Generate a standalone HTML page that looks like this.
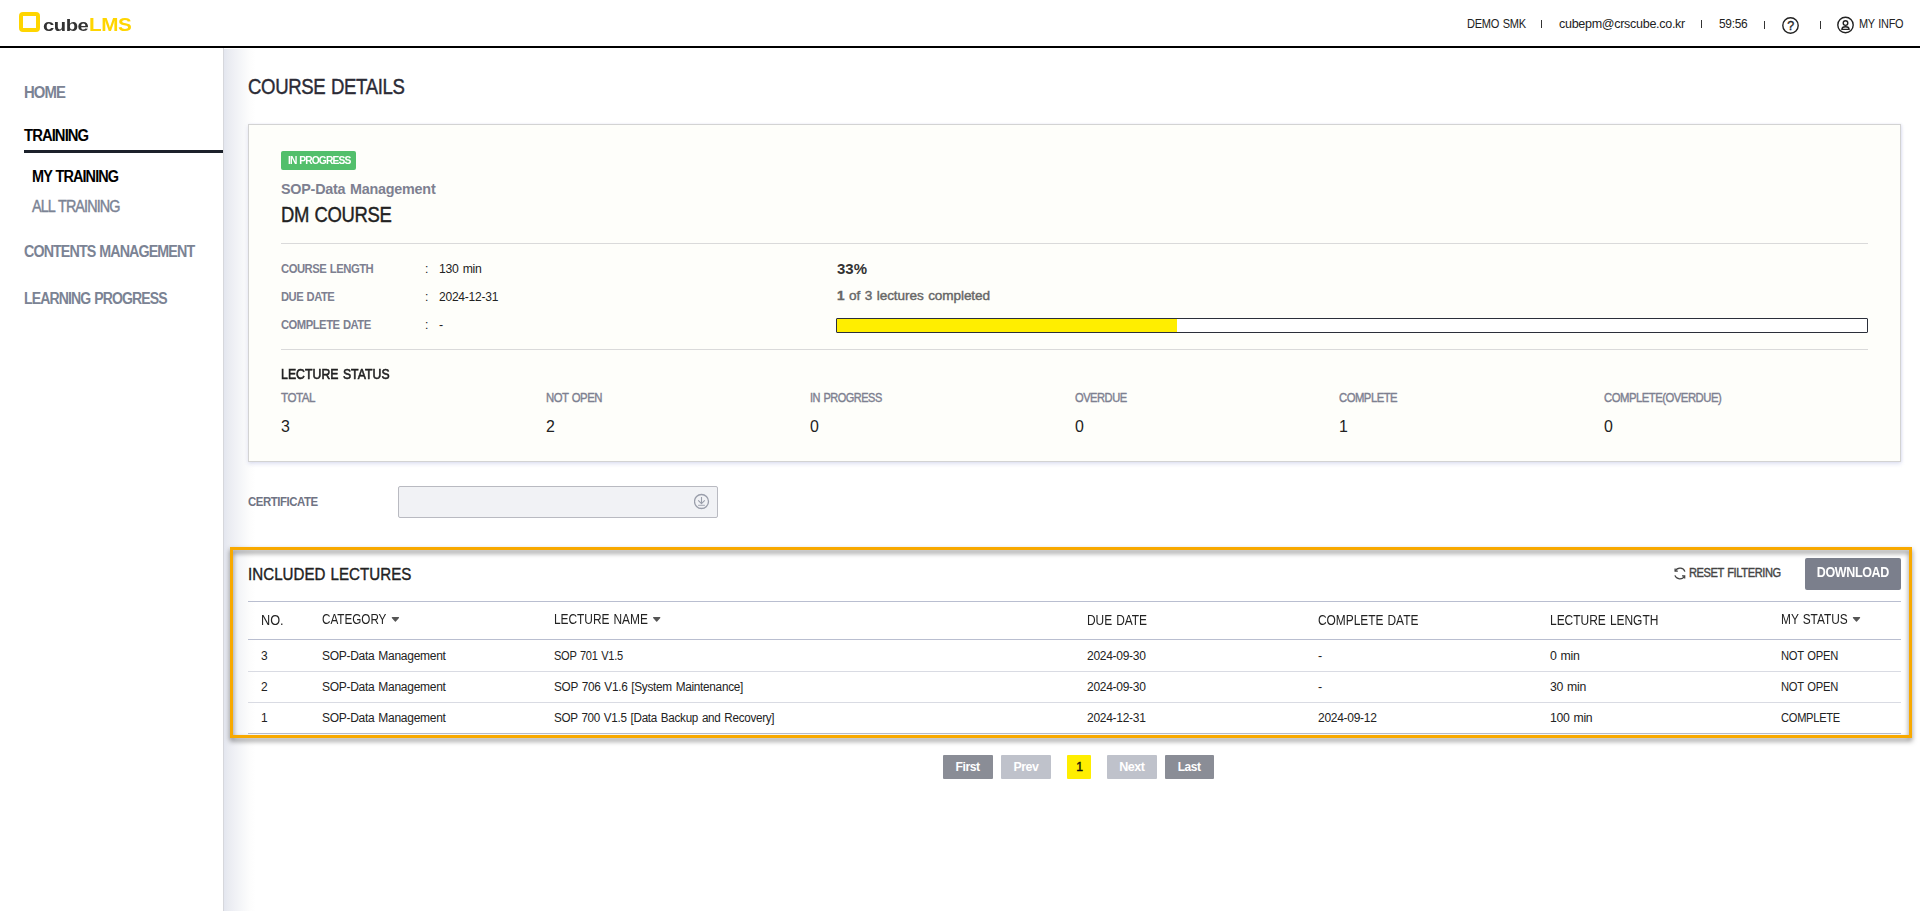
<!DOCTYPE html>
<html lang="en">
<head>
<meta charset="utf-8">
<title>cubeLMS - Course Details</title>
<style>
:root{--ff:"Liberation Sans",sans-serif;--cs:1.065;--csm:1.04;--ms:0.4px;--ws:.07em}
*{box-sizing:border-box;margin:0;padding:0}
html,body{width:1920px;height:911px;overflow:hidden;background:#fff}
body{font-family:var(--ff);color:#222;position:relative;font-size:13px;line-height:1;letter-spacing:-.4px;word-spacing:var(--ws)}
ul{list-style:none}
a{color:inherit;text-decoration:none}
.t{display:inline-block;white-space:nowrap;transform-origin:0 50%;font-size:calc(1em*var(--cs))}
.t.m{font-size:calc(1em*var(--csm))}
.t.r{transform-origin:100% 50%}
.t.c{transform-origin:50% 50%}
.w5{font-weight:500;-webkit-text-stroke:var(--ms) currentColor}
.abs{position:absolute}
/* every text line: absolutely positioned box, line-height == height */
.l{position:absolute;white-space:nowrap;line-height:20px;height:20px}

/* header */
header{position:absolute;left:0;top:0;width:1920px;height:48px;border-bottom:2px solid #000;background:#fff}
.logo{position:absolute;left:19px;top:12px;width:115px;height:22px}
.logo .sq{position:absolute;left:0;top:0;width:21px;height:20px;border:4px solid #ffd500;border-radius:4px}
.logo .cube{position:absolute;left:23.6px;top:6.4px;font-family:"Liberation Sans",sans-serif;font-weight:bold;font-size:17px;line-height:16px;color:#333;transform-origin:0 50%;transform:scaleX(1.19)}
.logo .lms{position:absolute;left:70px;top:5.3px;font-family:"Liberation Sans",sans-serif;font-weight:bold;font-size:18px;line-height:16px;color:#ffd500;transform-origin:0 50%;transform:scaleX(1.147)}
.user .l{font-size:12px;color:#222;top:13px;letter-spacing:-.3px}
.sep{position:absolute;top:20px;width:1px;height:8px;background:#333}

/* sidebar */
aside{position:absolute;left:0;top:48px;width:224px;height:863px;border-right:1px solid #d6d7dc;background:#fff}
aside .l{font-size:15px;font-weight:700;color:#7b8394;letter-spacing:-1px}
aside .l.on{color:#000}
aside .bar{position:absolute;left:24px;top:102px;width:199px;height:3px;background:#1c212b}

/* main */
main{position:absolute;left:224px;top:49px;width:1696px;height:862px;background:linear-gradient(to right,#e3e6ef 0,#e9ebf1 4px,#eff0f5 10px,#f6f7f9 18px,#fdfdfd 26px,#fff 32px)}
h1{font-weight:500;font-size:20px;color:#2b2b36}
h1,.ttl,.note,.lsh,.lsl,.sec,.reset,.pg.cur .l,.m5{-webkit-text-stroke:var(--ms) currentColor}
.card{position:absolute;left:24px;top:75px;width:1653px;height:338px;background:#fefefa;border:1px solid #d3d3d3;box-shadow:0 2px 4px rgba(130,140,205,.24),1px 0 2px rgba(130,140,205,.12)}
.badge{position:absolute;left:32px;top:26px;width:75px;height:19px;border-radius:2px;background:#52bf6b}
.badge .l{left:6.5px;top:-1px;height:19px;line-height:19px;font-size:11px;font-weight:700;color:#fff;letter-spacing:-1px}
.hr{position:absolute;left:32px;width:1587px;height:1px;background:#dadada}
.lab{font-size:12px;font-weight:700;color:#7d8090;letter-spacing:-.55px}
.val{font-size:12px;color:#222;letter-spacing:-.25px}
.prog{position:absolute;left:587px;top:193px;width:1032px;height:15px;border:1px solid #2b2f3a;background:#fff;border-radius:1px}
.prog i{position:absolute;left:0;top:0;height:13px;width:340px;background:#ffee00}
.cert{position:absolute;left:174px;top:437px;width:320px;height:32px;border:1px solid #b9bac1;background:#f1f2f5;border-radius:2px}

.sub{font-size:14px;font-weight:700;color:#7d8090;letter-spacing:-.23px}
.ttl{font-size:20px;font-weight:500;color:#222}
.pct{font-size:14px;font-weight:700;color:#333;letter-spacing:0}
.note{font-size:13px;color:#666;font-weight:500;letter-spacing:-.1px}
.note b{font-weight:700}
.lsh{font-size:13px;font-weight:500;color:#222;letter-spacing:.1px;-webkit-text-stroke:calc(var(--ms)*1.5) currentColor}
.lsl{font-size:12px;color:#7d8090;font-weight:500;letter-spacing:-.55px}
.lsv{font-size:16px;color:#222}
.certl{font-size:12px;font-weight:700;color:#6f7383;letter-spacing:-.5px}
.sec{font-size:16px;font-weight:500;color:#222;letter-spacing:.05px}
.reset{font-size:12px;color:#444;font-weight:500;letter-spacing:-.45px}
.dl{position:absolute;left:1581px;top:509px;width:96px;height:32px;background:#7b7f8c;border-radius:2px}
.dl .l{left:0;width:96px;text-align:center;top:4.4px;font-size:13px;font-weight:700;color:#fff;letter-spacing:-.4px}
table{position:absolute;left:24px;top:552px;width:1653px;border-collapse:collapse;table-layout:fixed;font-size:12px}
.grid{position:absolute;left:24px;width:1653px;height:1px;background:#b9bed0}
.grid.r{background:#d9dbe3}
.th{font-size:13px;color:#222;letter-spacing:-.03px}
.td{font-size:12px;color:#222;letter-spacing:-.3px}
.tri{position:absolute;width:10px;height:7px}
.pg{position:absolute;top:706px;height:24px;border-radius:1px;background:#8a8d96}
.pg.off{background:#bfc2cb}
.pg.cur{background:#ffee00}
.pg .l{left:0;width:100%;text-align:center;top:1px;font-size:12px;font-weight:700;color:#fff;letter-spacing:-.5px}
.pg.cur .l{color:#111;font-weight:500}
.hl{position:absolute;left:230px;top:547px;width:1682px;height:191px;border:3px solid #f8a900;filter:drop-shadow(.5px 3px 2.8px rgba(0,0,0,.5));pointer-events:none}
</style>
</head>
<body>
<header>
  <a class="logo" href="#"><span class="sq"></span><span class="cube">cube</span><span class="lms">LMS</span></a>
  <div class="user">
    <div class="l" style="left:1466.5px"><span class="t" style="transform:translateY(1.00px) scaleX(0.8661)">DEMO SMK</span></div>
    <i class="sep" style="left:1541px"></i>
    <div class="l" style="left:1558.5px"><span class="t m" style="transform:translateY(1.00px) scaleX(1.0064)">cubepm@crscube.co.kr</span></div>
    <i class="sep" style="left:1701px"></i>
    <div class="l" style="left:1718.5px"><span class="t" style="transform:translateY(1.00px) scaleX(0.9354)">59:56</span></div>
    <i class="sep" style="left:1764px;top:21px"></i>
    <svg class="abs" style="left:1781px;top:16px" width="19" height="19" viewBox="0 0 19 19"><circle cx="9.5" cy="9.5" r="7.7" fill="none" stroke="#222" stroke-width="1.4"/><text x="9.5" y="13.9" text-anchor="middle" font-family="Liberation Sans, sans-serif" font-size="12.5" fill="#222" stroke="#222" stroke-width=".35">?</text></svg>
    <i class="sep" style="left:1820px;top:21px"></i>
    <svg class="abs" style="left:1836px;top:15px" width="19" height="20" viewBox="0 0 19 20" fill="none" stroke="#222" stroke-width="1.4"><g transform="translate(0 .5)"><circle cx="9.5" cy="9.5" r="7.7"/><circle cx="9.5" cy="7.6" r="2.3"/><path d="M5.9 13.9c0-1.9 1.2-2.7 3.6-2.7s3.6.8 3.6 2.7z" stroke-linejoin="round"/></g></svg>
    <div class="l" style="left:1859px"><span class="t" style="transform:translateY(1.00px) scaleX(0.8555)">MY INFO</span></div>
  </div>
</header>

<aside>
  <nav>
    <ul>
      <li><a class="l" style="left:24px;top:34px" href="#"><span class="t" style="transform:translateY(1.00px) scaleX(0.9324)">HOME</span></a></li>
      <li><a class="l on" style="left:24px;top:77px" href="#"><span class="t" style="transform:translateY(1.00px) scaleX(0.9284)">TRAINING</span></a>
        <i class="bar"></i>
        <ul>
          <li><a class="l on" style="left:32px;top:118px" href="#"><span class="t" style="transform:translateY(1.00px) scaleX(0.9048)">MY TRAINING</span></a></li>
          <li><a class="l m5" style="left:32px;top:148px;font-weight:500" href="#"><span class="t" style="transform:translateY(1.00px) scaleX(0.9003)">ALL TRAINING</span></a></li>
        </ul>
      </li>
      <li><a class="l" style="left:24px;top:193px" href="#"><span class="t" style="transform:translateY(1.00px) scaleX(0.8941)">CONTENTS MANAGEMENT</span></a></li>
      <li><a class="l" style="left:24px;top:240px" href="#"><span class="t" style="transform:translateY(1.00px) scaleX(0.8799)">LEARNING PROGRESS</span></a></li>
    </ul>
  </nav>
</aside>

<main>
  <h1 class="l" style="left:24px;top:27px"><span class="t" style="transform:translateY(1.00px) scaleX(0.8720)">COURSE DETAILS</span></h1>

  <section class="card">
    <div class="badge"><span class="l"><span class="t" style="transform:translateY(0.00px) scaleX(0.8758)">IN PROGRESS</span></span></div>
    <p class="l sub" style="left:32px;top:53px"><span class="t m" style="transform:translateY(1.00px) scaleX(0.9864)">SOP-Data Management</span></p>
    <h2 class="l ttl" style="left:32px;top:79px"><span class="t" style="transform:translateY(1.00px) scaleX(0.8663)">DM COURSE</span></h2>
    <i class="hr" style="top:118px"></i>
    <dl>
      <dt class="l lab" style="left:32px;top:133px"><span class="t" style="transform:translateY(1.00px) scaleX(0.8839)">COURSE LENGTH</span></dt>
      <dd class="l val" style="left:176px;top:133px"><span class="t m" style="transform:translateY(1.00px) scaleX(0.9612)">:</span></dd>
      <dd class="l val" style="left:189.5px;top:133px"><span class="t m" style="transform:translateY(1.00px) scaleX(0.9799)">130 min</span></dd>
      <dt class="l lab" style="left:32px;top:161px"><span class="t" style="transform:translateY(1.00px) scaleX(0.8769)">DUE DATE</span></dt>
      <dd class="l val" style="left:176px;top:161px"><span class="t m" style="transform:translateY(1.00px) scaleX(0.9612)">:</span></dd>
      <dd class="l val" style="left:189.5px;top:161px"><span class="t m" style="transform:translateY(1.00px) scaleX(0.9646)">2024-12-31</span></dd>
      <dt class="l lab" style="left:32px;top:189px"><span class="t" style="transform:translateY(1.00px) scaleX(0.8795)">COMPLETE DATE</span></dt>
      <dd class="l val" style="left:176px;top:189px"><span class="t m" style="transform:translateY(1.00px) scaleX(0.9612)">:</span></dd>
      <dd class="l val" style="left:189.5px;top:189px"><span class="t m" style="transform:translateY(1.00px) scaleX(1.0040)">-</span></dd>
    </dl>
    <p class="l pct" style="left:587.7px;top:133px"><span class="t" style="transform:translateY(1.00px) scaleX(1.0058)">33%</span></p>
    <p class="l note" style="left:587.7px;top:160px"><span class="t m" style="transform:translateY(1.00px) scaleX(1.0051)"><b>1</b> of 3 lectures completed</span></p>
    <div class="prog"><i></i></div>
    <i class="hr" style="top:224px"></i>
    <h3 class="l lsh" style="left:32px;top:239px"><span class="t" style="transform:translateY(0.00px) scaleX(0.8828)">LECTURE STATUS</span></h3>
    <ul>
      <li><span class="l lsl" style="left:32px;top:262px"><span class="t" style="transform:translateY(1.00px) scaleX(0.9114)">TOTAL</span></span><span class="l lsv" style="left:32px;top:290px"><span class="t" style="transform:translateY(2.00px) scaleX(0.9346)">3</span></span></li>
      <li><span class="l lsl" style="left:296.5px;top:262px"><span class="t" style="transform:translateY(1.00px) scaleX(0.8896)">NOT OPEN</span></span><span class="l lsv" style="left:296.5px;top:290px"><span class="t" style="transform:translateY(2.00px) scaleX(0.9346)">2</span></span></li>
      <li><span class="l lsl" style="left:561px;top:262px"><span class="t" style="transform:translateY(1.00px) scaleX(0.8590)">IN PROGRESS</span></span><span class="l lsv" style="left:561px;top:290px"><span class="t" style="transform:translateY(2.00px) scaleX(0.9346)">0</span></span></li>
      <li><span class="l lsl" style="left:825.5px;top:262px"><span class="t" style="transform:translateY(1.00px) scaleX(0.8714)">OVERDUE</span></span><span class="l lsv" style="left:825.5px;top:290px"><span class="t" style="transform:translateY(2.00px) scaleX(0.9346)">0</span></span></li>
      <li><span class="l lsl" style="left:1090px;top:262px"><span class="t" style="transform:translateY(1.00px) scaleX(0.8835)">COMPLETE</span></span><span class="l lsv" style="left:1090px;top:290px"><span class="t" style="transform:translateY(2.00px) scaleX(0.9346)">1</span></span></li>
      <li><span class="l lsl" style="left:1354.5px;top:262px"><span class="t" style="transform:translateY(1.00px) scaleX(0.8848)">COMPLETE(OVERDUE)</span></span><span class="l lsv" style="left:1354.5px;top:290px"><span class="t" style="transform:translateY(2.00px) scaleX(0.9346)">0</span></span></li>
    </ul>
  </section>

  <div class="l certl" style="left:24px;top:442px"><span class="t" style="transform:translateY(1.00px) scaleX(0.8938)">CERTIFICATE</span></div>
  <div class="cert">
    <svg class="abs" style="right:7px;top:6px" width="16" height="17" viewBox="0 0 16 17" fill="none" stroke="#9a9eaa" stroke-width="1.1"><g transform="translate(-.5 .5)"><circle cx="8" cy="8" r="7" stroke-width="1.3"/><path d="M8 3.4v6.6M4.7 6.9 8 10.2l3.3-3.3" stroke-linejoin="round"/><path d="M4.6 11.8h6.8" stroke-width=".9"/></g></svg>
  </div>

  <section class="lect" role="table" aria-label="Included lectures">
    <h2 class="l sec" style="left:24px;top:514px"><span class="t" style="transform:translateY(2.00px) scaleX(0.8864)">INCLUDED LECTURES</span></h2>
    <svg class="abs" style="left:1448px;top:517px" width="16" height="16" viewBox="0 0 16 16" fill="none" stroke="#444" stroke-width="1.2"><g transform="translate(.6 .2) scale(1.043)"><path d="M11.8 5.2A5 5 0 0 0 2.6 4.6M2.2 8.8a5 5 0 0 0 9.2.6"/><path d="M2.4 2.2v2.6H5M11.6 11.8V9.2H9"/></g></svg>
    <a class="l reset" style="left:1465px;top:513px" href="#"><span class="t" style="transform:translateY(1.00px) scaleX(0.8676)">RESET FILTERING</span></a>
    <a class="dl" href="#"><span class="l"><span class="t c" style="transform:translateY(0.00px) scaleX(0.9050)">DOWNLOAD</span></span></a>

    <i class="grid" style="top:552px"></i>
    <div class="thead" role="row">
      <span role="columnheader" class="l th" style="left:37px;top:561px"><span class="t" style="transform:translateY(0.00px) scaleX(0.9216)">NO.</span></span>
      <span role="columnheader" class="l th" style="left:98px;top:560px"><span class="t" style="transform:translateY(0.00px) scaleX(0.8460)">CATEGORY</span></span><svg class="tri" style="left:166px;top:567px" viewBox="0 0 10 7"><path transform="translate(0.9 0.4)" d="M1.4 1.2h6.2L4.5 4.6z" fill="#555" stroke="#555" stroke-width="1.2" stroke-linejoin="round"/></svg>
      <span role="columnheader" class="l th" style="left:330px;top:560px"><span class="t" style="transform:translateY(0.00px) scaleX(0.8622)">LECTURE NAME</span></span><svg class="tri" style="left:428px;top:567px" viewBox="0 0 10 7"><path transform="translate(0.2 0.4)" d="M1.4 1.2h6.2L4.5 4.6z" fill="#555" stroke="#555" stroke-width="1.2" stroke-linejoin="round"/></svg>
      <span role="columnheader" class="l th" style="left:863px;top:561px"><span class="t" style="transform:translateY(0.00px) scaleX(0.8628)">DUE DATE</span></span>
      <span role="columnheader" class="l th" style="left:1094px;top:561px"><span class="t" style="transform:translateY(0.00px) scaleX(0.8630)">COMPLETE DATE</span></span>
      <span role="columnheader" class="l th" style="left:1326px;top:561px"><span class="t" style="transform:translateY(0.00px) scaleX(0.8671)">LECTURE LENGTH</span></span>
      <span role="columnheader" class="l th" style="left:1557px;top:560px"><span class="t" style="transform:translateY(0.00px) scaleX(0.8603)">MY STATUS</span></span><svg class="tri" style="left:1628px;top:567px" viewBox="0 0 10 7"><path transform="translate(0.0 0.4)" d="M1.4 1.2h6.2L4.5 4.6z" fill="#555" stroke="#555" stroke-width="1.2" stroke-linejoin="round"/></svg>
    </div>
    <i class="grid" style="top:590px"></i>
    <div class="row" role="row">
      <span role="cell" class="l td" style="left:37px;top:596px"><span class="t" style="transform:translateY(1.00px) scaleX(0.9358)">3</span></span>
      <span role="cell" class="l td" style="left:98px;top:596px"><span class="t m" style="transform:translateY(1.00px) scaleX(0.9636)">SOP-Data Management</span></span>
      <span role="cell" class="l td" style="left:330px;top:596px"><span class="t" style="transform:translateY(1.00px) scaleX(0.8663)">SOP 701 V1.5</span></span>
      <span role="cell" class="l td" style="left:863px;top:596px"><span class="t m" style="transform:translateY(1.00px) scaleX(0.9643)">2024-09-30</span></span>
      <span role="cell" class="l td" style="left:1094px;top:596px"><span class="t m" style="transform:translateY(1.00px) scaleX(1.0040)">-</span></span>
      <span role="cell" class="l td" style="left:1326px;top:596px"><span class="t m" style="transform:translateY(1.00px) scaleX(0.9896)">0 min</span></span>
      <span role="cell" class="l td" style="left:1557px;top:596px"><span class="t" style="transform:translateY(1.00px) scaleX(0.8773)">NOT OPEN</span></span>
    </div>
    <i class="grid r" style="top:622px"></i>
    <div class="row" role="row">
      <span role="cell" class="l td" style="left:37px;top:627px"><span class="t" style="transform:translateY(1.00px) scaleX(0.9358)">2</span></span>
      <span role="cell" class="l td" style="left:98px;top:627px"><span class="t m" style="transform:translateY(1.00px) scaleX(0.9636)">SOP-Data Management</span></span>
      <span role="cell" class="l td" style="left:330px;top:627px"><span class="t m" style="transform:translateY(1.00px) scaleX(0.9448)">SOP 706 V1.6 [System Maintenance]</span></span>
      <span role="cell" class="l td" style="left:863px;top:627px"><span class="t m" style="transform:translateY(1.00px) scaleX(0.9643)">2024-09-30</span></span>
      <span role="cell" class="l td" style="left:1094px;top:627px"><span class="t m" style="transform:translateY(1.00px) scaleX(1.0040)">-</span></span>
      <span role="cell" class="l td" style="left:1326px;top:627px"><span class="t m" style="transform:translateY(1.00px) scaleX(0.9838)">30 min</span></span>
      <span role="cell" class="l td" style="left:1557px;top:627px"><span class="t" style="transform:translateY(1.00px) scaleX(0.8773)">NOT OPEN</span></span>
    </div>
    <i class="grid r" style="top:653px"></i>
    <div class="row" role="row">
      <span role="cell" class="l td" style="left:37px;top:658px"><span class="t" style="transform:translateY(1.00px) scaleX(0.9358)">1</span></span>
      <span role="cell" class="l td" style="left:98px;top:658px"><span class="t m" style="transform:translateY(1.00px) scaleX(0.9636)">SOP-Data Management</span></span>
      <span role="cell" class="l td" style="left:330px;top:658px"><span class="t m" style="transform:translateY(1.00px) scaleX(0.9358)">SOP 700 V1.5 [Data Backup and Recovery]</span></span>
      <span role="cell" class="l td" style="left:863px;top:658px"><span class="t m" style="transform:translateY(1.00px) scaleX(0.9643)">2024-12-31</span></span>
      <span role="cell" class="l td" style="left:1094px;top:658px"><span class="t m" style="transform:translateY(1.00px) scaleX(0.9643)">2024-09-12</span></span>
      <span role="cell" class="l td" style="left:1326px;top:658px"><span class="t m" style="transform:translateY(1.00px) scaleX(0.9801)">100 min</span></span>
      <span role="cell" class="l td" style="left:1557px;top:658px"><span class="t" style="transform:translateY(1.00px) scaleX(0.8694)">COMPLETE</span></span>
    </div>
    <i class="grid" style="top:684px"></i>
  </section>

  <nav class="pager" aria-label="Pagination">
    <a class="pg" style="left:719px;width:50px" href="#"><span class="l"><span class="t c" style="transform:translateY(1.00px) scaleX(0.9547)">First</span></span></a>
    <a class="pg off" style="left:777px;width:50px" href="#"><span class="l"><span class="t c" style="transform:translateY(1.00px) scaleX(0.9708)">Prev</span></span></a>
    <a class="pg cur" style="left:843px;width:24px" href="#"><span class="l"><span class="t c" style="transform:translateY(1.00px) scaleX(0.9598)">1</span></span></a>
    <a class="pg off" style="left:883px;width:50px" href="#"><span class="l"><span class="t c" style="transform:translateY(1.00px) scaleX(0.9817)">Next</span></span></a>
    <a class="pg" style="left:941px;width:49px" href="#"><span class="l"><span class="t c" style="transform:translateY(1.00px) scaleX(0.9381)">Last</span></span></a>
  </nav>
</main>
<div class="hl" aria-hidden="true"></div>
</body>
</html>
